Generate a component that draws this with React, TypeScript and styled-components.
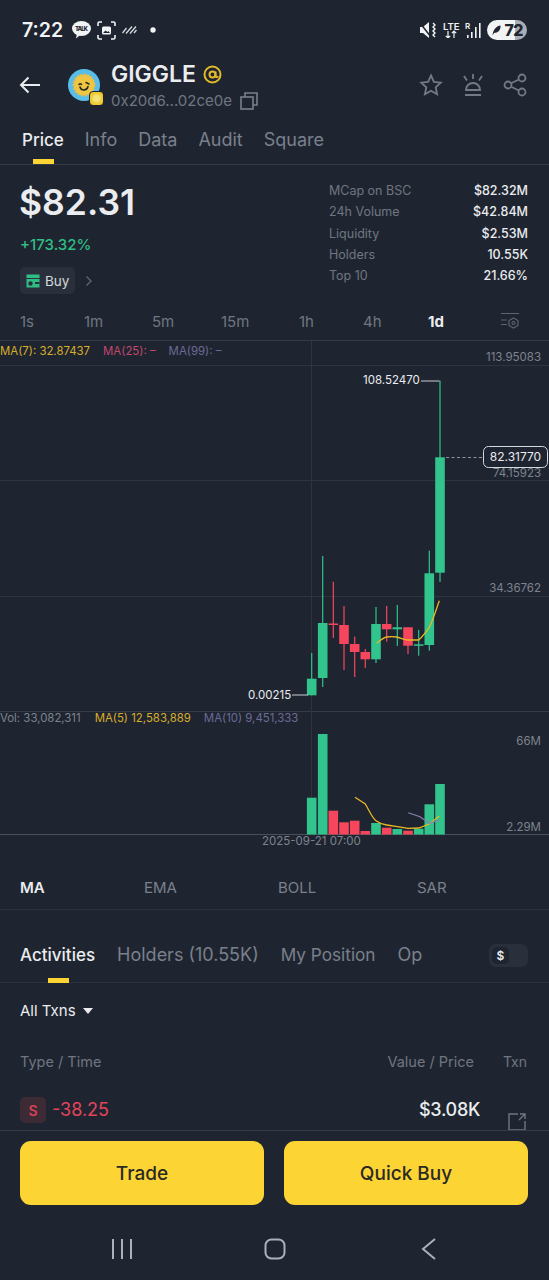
import { FC } from 'react';
import styled, { createGlobalStyle } from 'styled-components';

const GlobalStyle = createGlobalStyle`
  html, body { margin: 0; padding: 0; background: #1f2530; }
  * { box-sizing: border-box; }
`;

const GREEN = '#2ebd85';
const RED = '#f6465d';
const YELLOW = '#fcd535';

const Page = styled.div`
  width: 549px;
  height: 1280px;
  background: #1f2530;
  color: #eaecef;
  font-family: Inter, 'Noto Sans', sans-serif;
  display: flex;
  flex-direction: column;
  overflow: hidden;
`;

const StatusBar = styled.div`
  height: 60px;
  padding: 0 22px;
  display: flex;
  align-items: center;
  justify-content: space-between;
`;

const StatusGroup = styled.div`
  display: flex;
  align-items: center;
`;

const Clock = styled.span`
  font-size: 19.5px;
  font-weight: 600;
  color: #f2f3f5;
  margin-right: 9px;
`;

const Battery = styled.div`
  width: 40px;
  height: 20px;
  border-radius: 10px;
  background: linear-gradient(90deg, #f2f3f5 70%, #a9adb5 70%);
  color: #1f2530;
  font-size: 16px;
  font-weight: 800;
  letter-spacing: -0.5px;
  display: flex;
  align-items: center;
  justify-content: space-between;
  padding: 0 4px 0 5px;
  margin-left: 6px;
`;

const Header = styled.div`
  height: 50px;
  padding: 0 22px 0 19px;
  display: flex;
  align-items: center;
`;

const CoinBox = styled.div`
  position: relative;
  width: 32px;
  height: 32px;
  margin-left: 27px;
  margin-right: 11px;
`;

const ChainBadge = styled.div`
  position: absolute;
  right: -4px;
  bottom: -5px;
  width: 15px;
  height: 15px;
  border-radius: 4px;
  background: radial-gradient(circle, #f6e27a 0 30%, #f0c92f 60%);
  border: 1px solid #1f2530;
`;

const TokenInfo = styled.div`
  display: flex;
  flex-direction: column;
  flex: 1;
  gap: 4px;
  margin-top: 2px;
`;

const TokenName = styled.div`
  display: flex;
  align-items: center;
  gap: 7px;
  font-size: 23px;
  font-weight: 600;
  line-height: 26px;
  color: #eaecef;
`;

const TokenAddress = styled.div`
  display: flex;
  align-items: center;
  gap: 8px;
  font-size: 15px;
  line-height: 20px;
  color: #6f7682;
`;

const HeaderActions = styled.div`
  display: flex;
  align-items: center;
  gap: 18px;
`;

const TopTabs = styled.div`
  height: 55px;
  padding: 18px 22px 0;
  display: flex;
  align-items: flex-start;
  gap: 21px;
  border-bottom: 1px solid #353b46;
`;

const TabItem = styled.div<{ $active?: boolean; $size?: number }>`
  position: relative;
  font-size: ${(p) => p.$size ?? 18}px;
  line-height: 24px;
  white-space: nowrap;
  color: ${(p) => (p.$active ? '#eaecef' : '#7a808c')};
  font-weight: ${(p) => (p.$active ? 500 : 400)};
`;

const TabMark = styled.div<{ $bottom: number }>`
  position: absolute;
  left: 50%;
  bottom: ${(p) => p.$bottom}px;
  width: 21px;
  height: 5px;
  margin-left: -10px;
  background: ${YELLOW};
`;

const Summary = styled.div`
  height: 141px;
  padding: 14px 21px 0 20px;
  display: flex;
  justify-content: space-between;
`;

const PriceColumn = styled.div`
  display: flex;
  flex-direction: column;
  align-items: flex-start;
`;

const BigPrice = styled.div`
  font-size: 35.5px;
  font-weight: 600;
  line-height: 48px;
  color: #eaecef;
  margin-left: -1px;
`;

const Change = styled.div`
  font-size: 15px;
  font-weight: 500;
  line-height: 20px;
  color: ${GREEN};
  margin-top: 8px;
`;

const BuyRow = styled.div`
  display: flex;
  align-items: center;
  gap: 10px;
  margin-top: 12px;
`;

const BuyChip = styled.div`
  height: 27px;
  padding: 0 6px;
  border-radius: 5px;
  background: #2a303b;
  display: flex;
  align-items: center;
  gap: 5px;
  font-size: 13.5px;
  color: #d5d8dd;
`;

const Stats = styled.div`
  width: 199px;
  display: grid;
  grid-template-columns: 1fr auto;
  grid-auto-rows: 21.3px;
  font-size: 12.5px;
  align-items: center;
  margin-top: 1px;
`;

const StatLabel = styled.span`
  color: #6f7682;
`;

const StatValue = styled.span`
  color: #eaecef;
  font-weight: 500;
  text-align: right;
`;

const Intervals = styled.div`
  height: 35px;
  padding: 0 29px 4px 20px;
  display: flex;
  align-items: center;
  justify-content: space-between;
  border-bottom: 1px solid #353b46;
`;

const IntervalItem = styled.span<{ $active?: boolean; $width: number }>`
  width: ${(p) => p.$width}px;
  font-size: 15px;
  color: ${(p) => (p.$active ? '#eaecef' : '#6f7682')};
  font-weight: ${(p) => (p.$active ? 700 : 400)};
`;

const IntervalTrack = styled.div`
  display: flex;
  align-items: center;
  flex: 1;
`;

const ChartBox = styled.div`
  position: relative;
  height: 510px;
`;

const ChartSvg = styled.svg`
  display: block;
  width: 549px;
  height: 510px;
`;

const Legend = styled.div<{ $top: number }>`
  position: absolute;
  left: 0;
  top: ${(p) => p.$top}px;
  display: flex;
  font-size: 11.4px;
  line-height: 14px;
  white-space: nowrap;
`;

const LegendItem = styled.span<{ $color: string; $gap: number }>`
  color: ${(p) => p.$color};
  margin-right: ${(p) => p.$gap}px;
`;

const IndicatorTabs = styled.div`
  height: 59px;
  padding: 15px 20px 0;
  display: flex;
  align-items: center;
  border-bottom: 1px solid #2b313c;
`;

const IndicatorItem = styled.span<{ $active?: boolean; $width: number }>`
  width: ${(p) => p.$width}px;
  font-size: 15px;
  font-weight: ${(p) => (p.$active ? 600 : 400)};
  color: ${(p) => (p.$active ? '#eaecef' : '#7a808c')};
`;

const Activity = styled.div`
  flex: 1;
  min-height: 0;
  overflow: hidden;
  display: flex;
  flex-direction: column;
`;

const ActivityTabs = styled.div`
  height: 73px;
  flex: none;
  padding: 33px 20px 0;
  display: flex;
  align-items: flex-start;
  gap: 22px;
  border-bottom: 1px solid #2b313c;
`;

const CurrencyToggle = styled.div`
  margin-left: auto;
  margin-right: 1px;
  margin-top: 1px;
  width: 39px;
  height: 23px;
  border-radius: 7px;
  background: #2a303b;
  padding: 3px;
  display: flex;
`;

const CurrencyKnob = styled.div`
  width: 17px;
  height: 17px;
  border-radius: 5px;
  background: #1f2530;
  color: #eaecef;
  font-size: 12px;
  font-weight: 600;
  display: flex;
  align-items: center;
  justify-content: center;
`;

const Filter = styled.div`
  padding: 18px 20px 0;
  display: flex;
  align-items: center;
  gap: 7px;
  font-size: 15px;
  line-height: 20px;
  color: #eaecef;
`;

const FilterCaret = styled.div`
  width: 0;
  height: 0;
  border-left: 5px solid transparent;
  border-right: 5px solid transparent;
  border-top: 6px solid #eaecef;
`;

const TableHead = styled.div`
  padding: 31px 22px 0 20px;
  display: flex;
  font-size: 14.5px;
  line-height: 20px;
  color: #6f7682;
`;

const HeadSpacer = styled.span`
  flex: 1;
`;

const TxnHead = styled.span`
  margin-left: 29px;
  font-size: 14px;
`;

const TxnRow = styled.div`
  height: 60px;
  flex: none;
  padding: 25px 23px 0 20px;
  display: flex;
  align-items: flex-start;
`;

const SideBadge = styled.div`
  width: 26px;
  height: 26px;
  border-radius: 5px;
  background: #3c2a35;
  color: #d9405a;
  font-size: 14px;
  font-weight: 600;
  display: flex;
  align-items: center;
  justify-content: center;
`;

const Amount = styled.span`
  font-size: 18px;
  line-height: 26px;
  color: #e5435c;
  margin-left: 6px;
  flex: 1;
`;

const TxnValue = styled.span`
  font-size: 18px;
  line-height: 26px;
  font-weight: 500;
  color: #eaecef;
  margin-right: 28px;
  letter-spacing: -0.3px;
`;

const TxnLink = styled.svg`
  margin-top: 16px;
`;

const Footer = styled.div`
  height: 150px;
  flex: none;
  border-top: 1px solid #353b46;
  display: flex;
  flex-direction: column;
`;

const Actions = styled.div`
  display: grid;
  grid-template-columns: 1fr 1fr;
  gap: 20px;
  padding: 10px 21px 0 20px;
`;

const ActionButton = styled.button`
  height: 64px;
  border: 0;
  border-radius: 11px;
  background: ${YELLOW};
  color: #2a2a24;
  font-family: inherit;
  font-size: 19px;
  font-weight: 500;
`;

const NavBar = styled.div`
  flex: 1;
  display: grid;
  grid-template-columns: repeat(3, 1fr);
  align-items: center;
  justify-items: center;
  padding: 12px 43px 0 45px;
`;

const StatusIcons: FC = () => (
  <>
    <svg width="19" height="18" viewBox="0 0 19 18">
      <ellipse cx="9.500" cy="7.500" rx="9.500" ry="7.500" fill="#f2f3f5" />
      <path d="M4 17.500l1-5h5z" fill="#f2f3f5" />
      <text x="9.500" y="9.800" fontSize="6" fontWeight="800" textAnchor="middle" fill="#1f2530" fontFamily="Inter" textLength="13">TALK</text>
    </svg>
    <svg width="19" height="19" viewBox="0 0 19 19" style={{ marginLeft: 6 }} fill="none" stroke="#f2f3f5" strokeWidth="1.600">
      <path d="M1 5V2.500A1.500 1.500 0 0 1 2.500 1H5M14 1h2.500A1.500 1.500 0 0 1 18 2.500V5M18 14v2.500a1.500 1.500 0 0 1-1.500 1.500H14M5 18H2.500A1.500 1.500 0 0 1 1 16.500V14" />
      <rect x="5" y="5.500" width="9" height="8" rx="1.500" fill="#f2f3f5" stroke="none" />
      <path d="M6 12l2.500-2.500 2 1.500 1-1 1.500 2z" fill="#1f2530" stroke="none" />
    </svg>
    <svg width="15" height="8" viewBox="0 0 15 8" style={{ marginLeft: 6 }} stroke="#d5d8dd" strokeWidth="1.300">
      <path d="M0.500 7l4-5M4 7.500l6-7M8 7.500l6-7M12 7l2.500-3" />
    </svg>
    <svg width="6" height="6" viewBox="0 0 6 6" style={{ marginLeft: 13 }}>
      <circle cx="3" cy="3" r="2.700" fill="#f2f3f5" />
    </svg>
  </>
);

const NetworkIcons: FC = () => (
  <>
    <svg width="16" height="16" viewBox="0 0 16 16">
      <path d="M0 5h3l6-5v16l-6-5H0z" fill="#f2f3f5" />
      <path d="M0 1l11 14" stroke="#1f2530" strokeWidth="1.500" />
      <path d="M13 1l2 2-2 2 2 2-2 2 2 2-2 2 2 2" fill="none" stroke="#f2f3f5" strokeWidth="1.400" />
    </svg>
    <svg width="17" height="16" viewBox="0 0 17 16" style={{ marginLeft: 7 }}>
      <text x="0" y="8" fontSize="9.500" fontWeight="600" fill="#f2f3f5" fontFamily="Inter">LTE</text>
      <path d="M5 9v7M2.800 13.800L5 16l2.200-2.200M11 16V9M8.800 11.200L11 9l2.200 2.200" fill="none" stroke="#f2f3f5" strokeWidth="1.200" />
    </svg>
    <svg width="16" height="16" viewBox="0 0 16 16" style={{ marginLeft: 5 }}>
      <text x="0" y="7" fontSize="8" fontWeight="600" fill="#f2f3f5" fontFamily="Inter">R</text>
      <rect x="2" y="13" width="1.600" height="3" fill="#f2f3f5" />
      <rect x="6" y="10" width="1.600" height="6" fill="#f2f3f5" />
      <rect x="10" y="5" width="1.600" height="11" fill="#f2f3f5" />
      <rect x="14" y="1" width="1.600" height="15" fill="#f2f3f5" />
    </svg>
  </>
);

const CoinLogo: FC = () => (
  <CoinBox>
    <svg width="32" height="32" viewBox="0 0 32 32">
      <circle cx="16" cy="16" r="16" fill="#58bde9" />
      <circle cx="16" cy="16" r="10.500" fill="#eec643" stroke="#e6bf48" strokeDasharray="2 1.500" strokeWidth="2" />
      <path d="M11 15.500c.8-1 1.800-1 2.500 0M18 13.500l3 1.500M12 18c1 4 7 4 8-.500" fill="none" stroke="#2a2a22" strokeWidth="1.500" strokeLinecap="round" />
    </svg>
    <ChainBadge />
  </CoinBox>
);

const candles = [
  { x: 311.7, top: 653, high: 678.7, low: 695.3, bottom: 695.3, up: true, vol: 797.7 },
  { x: 322.7, top: 556, high: 623, low: 678, bottom: 687, up: true, vol: 734 },
  { x: 333.3, top: 581.7, high: 623.5, low: 625, bottom: 638, up: false, vol: 810.7 },
  { x: 344, top: 606, high: 625, low: 644, bottom: 670, up: false, vol: 822.3 },
  { x: 354.7, top: 636.7, high: 644, low: 652, bottom: 677, up: false, vol: 820.7 },
  { x: 365.3, top: 649, high: 652, low: 659.3, bottom: 668, up: false, vol: 831 },
  { x: 376, top: 607, high: 624, low: 659.3, bottom: 663, up: true, vol: 823 },
  { x: 386.7, top: 606, high: 624, low: 629.3, bottom: 641.7, up: false, vol: 827.7 },
  { x: 397.3, top: 605, high: 627.3, low: 629.3, bottom: 646, up: true, vol: 829 },
  { x: 408, top: 627.3, high: 627.3, low: 645.7, bottom: 654, up: false, vol: 830.7 },
  { x: 418.7, top: 630, high: 644.3, low: 645.3, bottom: 655.7, up: true, vol: 828.7 },
  { x: 429.3, top: 550.7, high: 573.3, low: 645, bottom: 650.7, up: true, vol: 804.3 },
  { x: 440, top: 380.7, high: 457.3, low: 572.7, bottom: 582, up: true, vol: 784 },
];

const axisLabels = [
  { text: '113.95083', y: 361 },
  { text: '74.15923', y: 477 },
  { text: '34.36762', y: 592 },
  { text: '66M', y: 745 },
  { text: '2.29M', y: 831 },
];

const Chart: FC = () => (
  <ChartSvg viewBox="0 341 549 510" fontFamily="Inter, sans-serif">
    <g stroke="#2f3540" strokeWidth="1">
      <path d="M0 365.500H549M0 480.500H549M0 596.500H549" />
      <path d="M0 711.500H549" stroke="#363c47" />
      <path d="M0 834.500H549" stroke="#4a505b" />
      <path d="M311.500 341V835" />
    </g>
    {candles.map((c) => {
      const color = c.up ? '#31c48d' : RED;
      return (
        <g key={c.x} fill={color}>
          <rect x={c.x - 0.6} y={c.top} width={1.2} height={c.bottom - c.top} />
          <rect x={c.x - 4.8} y={c.high} width={9.6} height={Math.max(c.low - c.high, 1.5)} />
          <rect x={c.x - 4.8} y={c.vol} width={9.6} height={834.5 - c.vol} />
        </g>
      );
    })}
    <path
      d="M376.700 643.300C380 641 383 637.500 386.700 637C390 636.500 393 636.500 396.700 637C400 637.500 404 640 408 640L418.700 640C422 637 426 632 429.300 627.300C433 620 436 610 439.300 600.700"
      fill="none"
      stroke="#e8b923"
      strokeWidth="1.300"
    />
    <path
      d="M355 797.300L365.300 804C369 810 372 818 376 820.700C379 823 383 824.500 386.700 825L397.300 826.700L408 828.300L418.700 828L429.300 824L439.300 816"
      fill="none"
      stroke="#e8b923"
      strokeWidth="1.300"
    />
    <path d="M408.300 812.700L420 816.700L429.300 823.300L439.300 820" fill="none" stroke="#8a7fb0" strokeWidth="1.200" />
    <path d="M421 381H439.500M292 695H308" stroke="#c9ccd2" strokeWidth="1" fill="none" />
    <path d="M446 457.500H483" stroke="#8d929b" strokeWidth="1" strokeDasharray="3 2.500" />
    <text x="363" y="384" fontSize="11.500" fill="#eaecef">108.52470</text>
    <text x="248" y="699" fontSize="11.500" fill="#eaecef">0.00215</text>
    {axisLabels.map((l) => (
      <text key={l.text} x="541" y={l.y} fontSize="11.500" fill="#7d838e" textAnchor="end">
        {l.text}
      </text>
    ))}
    <rect x="483.500" y="446.500" width="64" height="21" rx="5" fill="#1f2530" stroke="#d5d8dd" />
    <text x="515.500" y="461" fontSize="12" fill="#eaecef" textAnchor="middle">82.31770</text>
    <text x="262" y="845" fontSize="11.500" fill="#7d838e">2025-09-21 07:00</text>
  </ChartSvg>
);

const App: FC = () => (
  <Page>
    <GlobalStyle />
    <StatusBar>
      <StatusGroup>
        <Clock>7:22</Clock>
        <StatusIcons />
      </StatusGroup>
      <StatusGroup>
        <NetworkIcons />
        <Battery>
          <svg width="9" height="11" viewBox="0 0 9 11">
            <path d="M0.500 10.500C1 5 4 1 8.500 0.500C9 5 6 8 2 8z" fill="#1f2530" />
          </svg>
          72
        </Battery>
      </StatusGroup>
    </StatusBar>

    <Header>
      <svg width="22" height="18" viewBox="0 0 22 18" fill="none" stroke="#eaecef" strokeWidth="2">
        <path d="M21 9H2M9.500 1.500L2 9l7.500 7.500" />
      </svg>
      <CoinLogo />
      <TokenInfo>
        <TokenName>
          GIGGLE
          <svg width="19" height="19" viewBox="0 0 19 19" fill="none" stroke="#e4b92a" strokeWidth="2">
            <circle cx="9.500" cy="9.500" r="8" />
            <circle cx="9.500" cy="9.500" r="3" />
            <path d="M12.500 6.500v4.500c0 1.500 2 1.500 2.500 0" />
          </svg>
        </TokenName>
        <TokenAddress>
          0x20d6...02ce0e
          <svg width="18" height="18" viewBox="0 0 18 18" fill="none" stroke="#7a808c" strokeWidth="1.600">
            <rect x="1" y="5" width="12" height="12" />
            <path d="M5 5V1h12v12h-4" />
          </svg>
        </TokenAddress>
      </TokenInfo>
      <HeaderActions>
        <svg width="24" height="24" viewBox="0 0 24 24" fill="none" stroke="#737985" strokeWidth="1.800">
          <path d="M12 2.500l2.900 6.300 6.900.8-5.100 4.700 1.400 6.900-6.100-3.500-6.100 3.500 1.400-6.900-5.100-4.700 6.900-.8z" />
        </svg>
        <svg width="24" height="24" viewBox="0 0 24 24" fill="none" stroke="#737985" strokeWidth="1.800">
          <path d="M12 1v5M3 3l3 4.500M21 3l-3 4.500M5 17c0-4 3-7 7-7s7 3 7 7zM4 22h16" />
        </svg>
        <svg width="24" height="24" viewBox="0 0 24 24" fill="none" stroke="#737985" strokeWidth="1.800">
          <circle cx="5" cy="12" r="3.500" />
          <circle cx="19" cy="5" r="3.500" />
          <circle cx="19" cy="19" r="3.500" />
          <path d="M8 10.300l8-3.800M8 13.700l8 3.800" />
        </svg>
      </HeaderActions>
    </Header>

    <TopTabs>
      <TabItem $active $size={17}>
        Price
        <TabMark $bottom={-12} />
      </TabItem>
      <TabItem>Info</TabItem>
      <TabItem>Data</TabItem>
      <TabItem>Audit</TabItem>
      <TabItem>Square</TabItem>
    </TopTabs>

    <Summary>
      <PriceColumn>
        <BigPrice>$82.31</BigPrice>
        <Change>+173.32%</Change>
        <BuyRow>
          <BuyChip>
            <svg width="14" height="14" viewBox="0 0 14 14">
              <rect x="0.500" y="0.500" width="13" height="3.500" fill={GREEN} />
              <rect x="0.500" y="5" width="13" height="8.500" fill={GREEN} />
              <circle cx="4.500" cy="9.500" r="2.200" fill="#2a303b" />
              <rect x="9" y="8" width="4.500" height="2" fill="#2a303b" />
            </svg>
            Buy
          </BuyChip>
          <svg width="8" height="12" viewBox="0 0 8 12" fill="none" stroke="#5d636f" strokeWidth="1.400">
            <path d="M1.500 1.500L6 6l-4.500 4.500" />
          </svg>
        </BuyRow>
      </PriceColumn>
      <Stats>
        <StatLabel>MCap on BSC</StatLabel>
        <StatValue>$82.32M</StatValue>
        <StatLabel>24h Volume</StatLabel>
        <StatValue>$42.84M</StatValue>
        <StatLabel>Liquidity</StatLabel>
        <StatValue>$2.53M</StatValue>
        <StatLabel>Holders</StatLabel>
        <StatValue>10.55K</StatValue>
        <StatLabel>Top 10</StatLabel>
        <StatValue>21.66%</StatValue>
      </Stats>
    </Summary>

    <Intervals>
      <IntervalTrack>
        <IntervalItem $width={64}>1s</IntervalItem>
        <IntervalItem $width={68}>1m</IntervalItem>
        <IntervalItem $width={69}>5m</IntervalItem>
        <IntervalItem $width={78}>15m</IntervalItem>
        <IntervalItem $width={64}>1h</IntervalItem>
        <IntervalItem $width={65}>4h</IntervalItem>
        <IntervalItem $width={40} $active>
          1d
        </IntervalItem>
      </IntervalTrack>
      <svg width="20" height="18" viewBox="0 0 20 18" fill="none" stroke="#5d636f" strokeWidth="1.200">
        <path d="M1 1.500h18M1 8h6M1 12.500h6" />
        <path d="M13.500 6l4.500 2.500v5L13.500 16 9 13.500v-5z" />
        <circle cx="13.500" cy="11" r="1.500" />
      </svg>
    </Intervals>

    <ChartBox>
      <Chart />
      <Legend $top={3}>
        <LegendItem $color="#d9ad2b" $gap={13}>MA(7): 32.87437</LegendItem>
        <LegendItem $color="#c2476f" $gap={13}>MA(25): –</LegendItem>
        <LegendItem $color="#6d6a96" $gap={0}>MA(99): –</LegendItem>
      </Legend>
      <Legend $top={370}>
        <LegendItem $color="#7d838e" $gap={14}>Vol: 33,082,311</LegendItem>
        <LegendItem $color="#d9ad2b" $gap={13}>MA(5) 12,583,889</LegendItem>
        <LegendItem $color="#6d6a96" $gap={0}>MA(10) 9,451,333</LegendItem>
      </Legend>
    </ChartBox>

    <IndicatorTabs>
      <IndicatorItem $width={124} $active>MA</IndicatorItem>
      <IndicatorItem $width={134}>EMA</IndicatorItem>
      <IndicatorItem $width={139}>BOLL</IndicatorItem>
      <IndicatorItem $width={40}>SAR</IndicatorItem>
    </IndicatorTabs>

    <Activity>
      <ActivityTabs>
        <TabItem $active $size={17}>
          Activities
          <TabMark $bottom={-16} />
        </TabItem>
        <TabItem>Holders (10.55K)</TabItem>
        <TabItem $size={17.2}>My Position</TabItem>
        <TabItem>Op</TabItem>
        <CurrencyToggle>
          <CurrencyKnob>$</CurrencyKnob>
        </CurrencyToggle>
      </ActivityTabs>
      <Filter>
        All Txns
        <FilterCaret />
      </Filter>
      <TableHead>
        <span>Type / Time</span>
        <HeadSpacer />
        <span>Value / Price</span>
        <TxnHead>Txn</TxnHead>
      </TableHead>
      <TxnRow>
        <SideBadge>S</SideBadge>
        <Amount>-38.25</Amount>
        <TxnValue>$3.08K</TxnValue>
        <TxnLink width="18" height="18" viewBox="0 0 18 18" fill="none" stroke="#6f7682" strokeWidth="1.400">
          <path d="M10 1H1v16h16V8M11 7l6-6M12 1h5v5" />
        </TxnLink>
      </TxnRow>
    </Activity>

    <Footer>
      <Actions>
        <ActionButton>Trade</ActionButton>
        <ActionButton>Quick Buy</ActionButton>
      </Actions>
      <NavBar>
        <svg width="22" height="22" viewBox="0 0 22 22" stroke="#aab0bc" strokeWidth="2">
          <path d="M2 1v20M11 1v20M20 1v20" />
        </svg>
        <svg width="22" height="22" viewBox="0 0 22 22" fill="none" stroke="#aab0bc" strokeWidth="2">
          <rect x="1.500" y="1.500" width="19" height="19" rx="6" />
        </svg>
        <svg width="16" height="22" viewBox="0 0 16 22" fill="none" stroke="#aab0bc" strokeWidth="2">
          <path d="M14 1L2 11l12 10" />
        </svg>
      </NavBar>
    </Footer>
  </Page>
);

export default App;
